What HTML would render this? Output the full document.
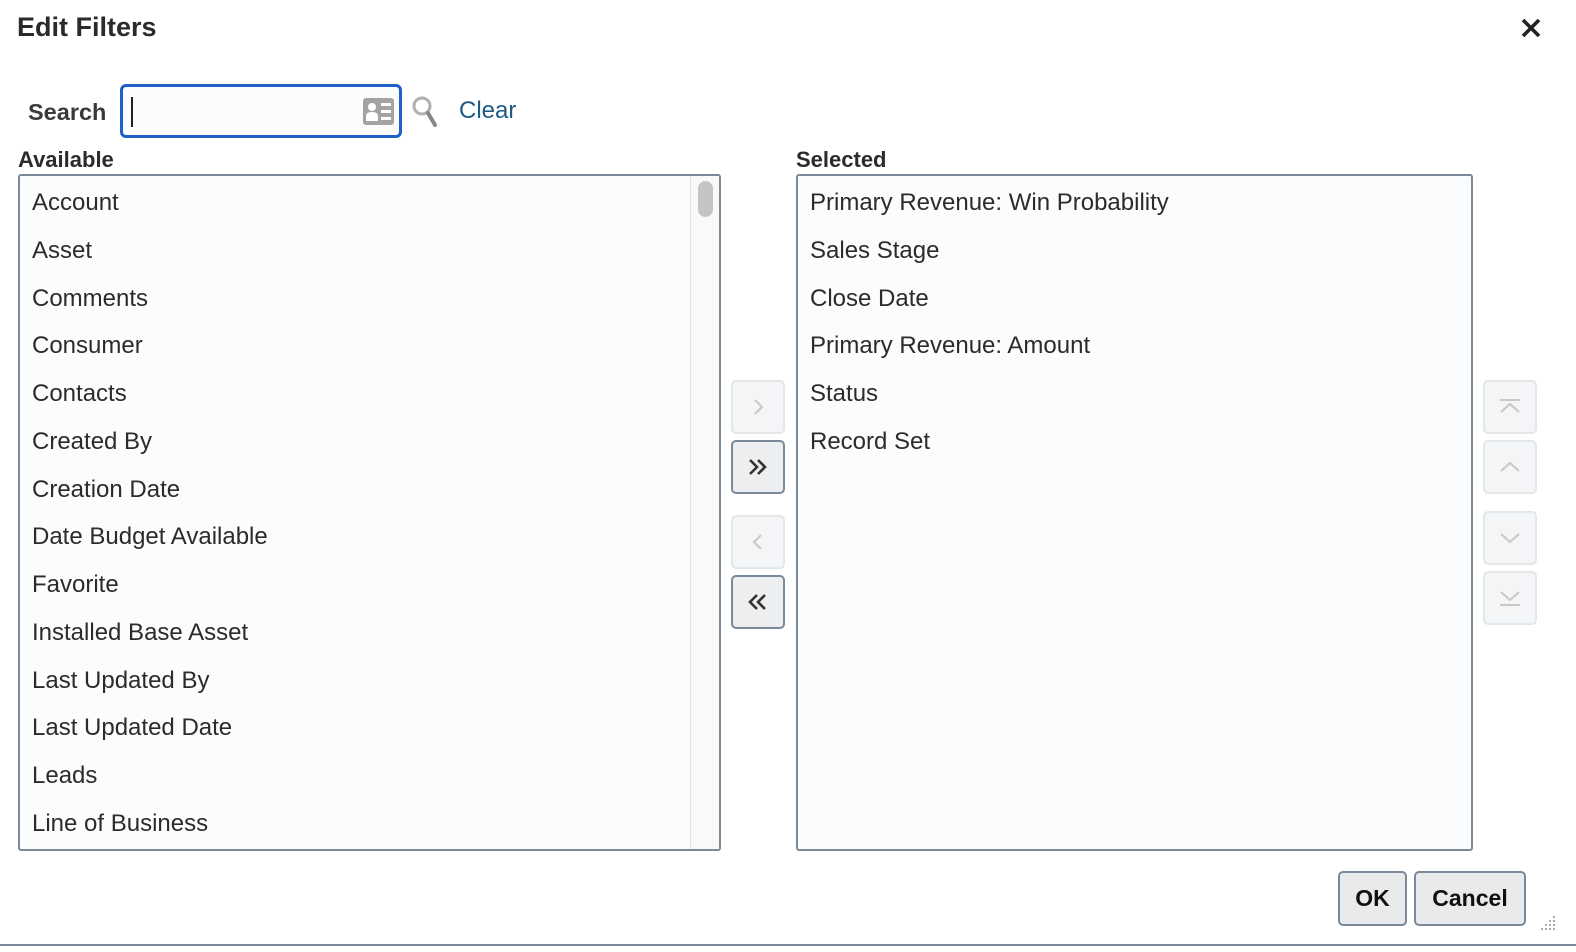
<!DOCTYPE html>
<html><head><style>
*{box-sizing:border-box;margin:0;padding:0}
body{width:1576px;height:952px;background:#fff;font-family:"Liberation Sans",sans-serif;position:relative;overflow:hidden;color:#2b2b2b}
.a{position:absolute}
.title{left:17px;top:12px;font-size:27px;font-weight:bold;color:#2b2b2b}
.lbl{font-size:22px;font-weight:bold;color:#2b2b2b}
.box{background:#fbfcfe;border:2px solid #7a8a9a;border-radius:3px}
.item{position:absolute;left:12px;font-size:24px;color:#2b2b2b;white-space:nowrap}
.btn{position:absolute;width:54px;height:54px;border-radius:5px;display:flex;align-items:center;justify-content:center}
.dis{background:#f4f5f6;border:2px solid #e4e7ea}
.en{background:#eceef0;border:2px solid #7a8a9a}
.pb{position:absolute;height:55px;top:871px;background:#e8eaec;border:2px solid #7a8a9a;border-radius:5px;font-weight:bold;font-size:23px;color:#111;display:flex;align-items:center;justify-content:center}
</style></head><body>
<div class="a title">Edit Filters</div>
<svg class="a" style="left:1520px;top:17px" width="22" height="22" viewBox="0 0 22 22"><path d="M3 3L19 19M19 3L3 19" stroke="#222" stroke-width="3.6"/></svg>
<div class="a lbl" style="left:28px;top:99px;color:#3a3a3a;font-size:23.5px">Search</div>
<div class="a" style="left:120px;top:84px;width:282px;height:54px;border:3px solid #1f5fc8;border-radius:6px;background:#fbfcfe"></div>
<div class="a" style="left:131px;top:97px;width:2px;height:30px;background:#222"></div>
<svg class="a" style="left:362px;top:97px" width="33" height="29" viewBox="0 0 33 29"><rect x="1" y="1" width="31" height="27" rx="3" fill="#a3a3a3"/><circle cx="10" cy="10" r="4" fill="#fff"/><path d="M4 24v-5q0-4 6-4t6 4v5z" fill="#fff"/><rect x="19" y="6" width="10" height="3" fill="#fff"/><rect x="19" y="13" width="10" height="3" fill="#fff"/><rect x="19" y="20" width="10" height="3" fill="#fff"/></svg>
<svg class="a" style="left:411px;top:95px" width="28" height="34" viewBox="0 0 28 34"><circle cx="11" cy="11" r="8" fill="none" stroke="#b0b0b0" stroke-width="3"/><path d="M17 18l7 12" stroke="#888" stroke-width="4" stroke-linecap="round"/></svg>
<div class="a" style="left:459px;top:97px;font-size:24px;color:#1d5a85">Clear</div>
<div class="a lbl" style="left:18px;top:147px">Available</div>
<div class="a lbl" style="left:796px;top:147px">Selected</div>
<div class="a box" style="left:18px;top:174px;width:703px;height:677px">
<div class="a" style="left:670px;top:0;width:29px;height:673px;border-left:1px solid #e2e2e2;background:#f9f9f9"></div>
<div class="a" style="left:678px;top:5px;width:15px;height:36px;background:#c4c4c4;border-radius:8px"></div>
<div class="item" style="top:13px">Account</div>
<div class="item" style="top:61px">Asset</div>
<div class="item" style="top:109px">Comments</div>
<div class="item" style="top:156px">Consumer</div>
<div class="item" style="top:204px">Contacts</div>
<div class="item" style="top:252px">Created By</div>
<div class="item" style="top:300px">Creation Date</div>
<div class="item" style="top:347px">Date Budget Available</div>
<div class="item" style="top:395px">Favorite</div>
<div class="item" style="top:443px">Installed Base Asset</div>
<div class="item" style="top:491px">Last Updated By</div>
<div class="item" style="top:538px">Last Updated Date</div>
<div class="item" style="top:586px">Leads</div>
<div class="item" style="top:634px">Line of Business</div>
</div>
<div class="a box" style="left:796px;top:174px;width:677px;height:677px">
<div class="item" style="top:13px">Primary Revenue: Win Probability</div>
<div class="item" style="top:61px">Sales Stage</div>
<div class="item" style="top:109px">Close Date</div>
<div class="item" style="top:156px">Primary Revenue: Amount</div>
<div class="item" style="top:204px">Status</div>
<div class="item" style="top:252px">Record Set</div>
</div>
<div class="btn dis" style="left:731px;top:380px"><svg width="20" height="20"><path d="M7 3l7 7-7 7" fill="none" stroke="#c8c8c8" stroke-width="2"/></svg></div>
<div class="btn en" style="left:731px;top:440px"><svg width="24" height="20"><path d="M4 3l7 7-7 7M12 3l7 7-7 7" fill="none" stroke="#333" stroke-width="2.6"/></svg></div>
<div class="btn dis" style="left:731px;top:515px"><svg width="20" height="20"><path d="M13 3l-7 7 7 7" fill="none" stroke="#c8c8c8" stroke-width="2"/></svg></div>
<div class="btn en" style="left:731px;top:575px"><svg width="24" height="20"><path d="M11 3l-7 7 7 7M19 3l-7 7 7 7" fill="none" stroke="#333" stroke-width="2.6"/></svg></div>
<div class="btn dis" style="left:1483px;top:380px"><svg width="24" height="20"><path d="M2 3h20M3 15l9-8 9 8" fill="none" stroke="#c8c8c8" stroke-width="2"/></svg></div>
<div class="btn dis" style="left:1483px;top:440px"><svg width="24" height="20"><path d="M3 14l9-8 9 8" fill="none" stroke="#c8c8c8" stroke-width="2"/></svg></div>
<div class="btn dis" style="left:1483px;top:511px"><svg width="24" height="20"><path d="M3 6l9 8 9-8" fill="none" stroke="#c8c8c8" stroke-width="2"/></svg></div>
<div class="btn dis" style="left:1483px;top:571px"><svg width="24" height="20"><path d="M3 4l9 8 9-8M2 17h20" fill="none" stroke="#c8c8c8" stroke-width="2"/></svg></div>
<div class="pb" style="left:1338px;width:69px">OK</div>
<div class="pb" style="left:1414px;width:112px">Cancel</div>
<svg class="a" style="left:1536px;top:914px" width="22" height="20"><g fill="#aaa"><rect x="17" y="2" width="2" height="2"/><rect x="13" y="6" width="2" height="2"/><rect x="17" y="6" width="2" height="2"/><rect x="9" y="10" width="2" height="2"/><rect x="13" y="10" width="2" height="2"/><rect x="17" y="10" width="2" height="2"/><rect x="5" y="14" width="2" height="2"/><rect x="9" y="14" width="2" height="2"/><rect x="13" y="14" width="2" height="2"/><rect x="17" y="14" width="2" height="2"/></g></svg>
<div class="a" style="left:0;top:944px;width:1576px;height:2px;background:#7a8a9a"></div>
</body></html>
